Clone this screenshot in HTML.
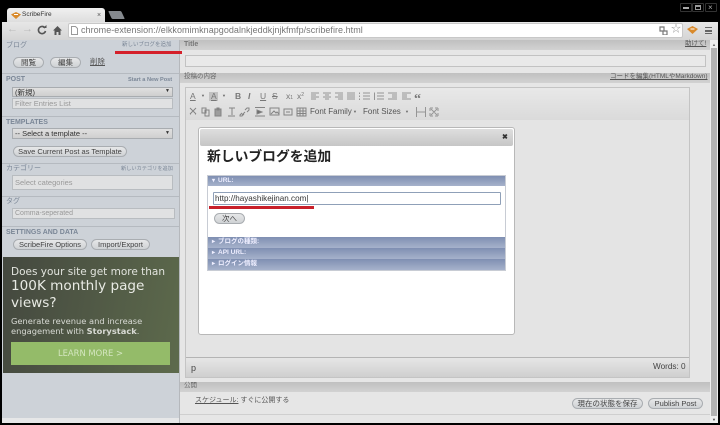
<!DOCTYPE html>
<html><head><meta charset="utf-8">
<style>
html,body{margin:0;padding:0;width:720px;height:425px;overflow:hidden;background:#000}
body{position:relative;font-family:"Liberation Sans","Noto Sans CJK JP",sans-serif;color:#555}
#w{position:absolute;left:0;top:0;width:720px;height:425px;filter:blur(.35px);overflow:hidden;background:#000}
div,span,svg{position:absolute;box-sizing:border-box}
.t{white-space:nowrap;line-height:1}
.lb{font-size:7px;color:#7b8797;font-weight:bold}
.lk{font-size:5.500px;color:#7b8797}
.btn{border:1px solid #a9adb1;border-radius:6px;background:linear-gradient(#e6e7e8,#cfd2d5);font-size:7.500px;color:#444;text-align:center;height:11px;line-height:9px;white-space:nowrap}
.inp{background:#e0e1e2;border:1px solid #b8bcc0;font-size:7.500px;color:#999;padding-left:2px;line-height:11px;white-space:nowrap}
.sel{background:linear-gradient(#e0e0e0,#cfcfcf);border:1px solid #a8acb0;font-size:7.500px;color:#333;padding-left:2px;line-height:9px;white-space:nowrap}
.hd{background:linear-gradient(#c0c0c0,#d2d2d2);left:180px;width:530px}
.ac{left:208px;width:297px;background:linear-gradient(#7f8fb2,#a6b2cb);color:#eef;font-size:6.500px;font-weight:bold;line-height:10px;padding-left:10px;white-space:nowrap}
.ar{left:4px;top:0;font-size:6px;line-height:10px}
.ic{font-size:8.500px;color:#777;line-height:1;white-space:nowrap}
</style></head><body><div id="w">

<!-- tab -->
<div style="left:7px;top:8px;width:98px;height:15px;background:linear-gradient(#f0f0f0,#dcdcdc);border-radius:3px 3px 0 0"></div>
<svg style="left:11px;top:12px" width="10" height="7" viewBox="0 0 10 7"><path d="M0 2.500L5 0L10 2.500L5 7Z" fill="#d98a2b"/><path d="M3 2.500H7" stroke="#fff" stroke-width="1"/></svg>
<div class="t" style="left:22px;top:12px;font-size:6.500px;color:#333;">ScribeFire</div>
<div class="t" style="left:97px;top:12px;font-size:7px;color:#555">×</div>
<div style="left:110px;top:11px;width:13px;height:8px;background:#85898e;transform:skewX(25deg);border-radius:1px"></div>

<!-- window controls -->
<div style="left:680px;top:3px;width:12px;height:9px;border:1px solid #333;border-radius:1px"></div><div style="left:683px;top:7px;width:6px;height:2px;background:#aaa"></div>
<div style="left:692px;top:3px;width:12px;height:9px;border:1px solid #333;border-radius:1px"></div><div style="left:695px;top:5px;width:6px;height:5px;border:1px solid #999;border-top-width:2px"></div>
<div style="left:705px;top:3px;width:12px;height:9px;border:1px solid #333;border-radius:1px"></div><div class="t" style="left:708px;top:4px;font-size:8px;color:#aaa">×</div>

<!-- toolbar -->
<div style="left:2px;top:22px;width:716px;height:18px;background:linear-gradient(#e6e6e6,#d4d4d4)"></div>
<div class="t" style="left:7px;top:24px;font-size:11px;color:#bbb">←</div>
<div class="t" style="left:22px;top:24px;font-size:11px;color:#bbb">→</div>
<svg style="left:37px;top:25px" width="10" height="10" viewBox="0 0 10 10"><path d="M8 3A3.600 3.600 0 1 0 8.500 6" fill="none" stroke="#555" stroke-width="1.600"/><path d="M6 3H9.500V0Z" fill="#555"/></svg>
<svg style="left:53px;top:26px" width="9" height="9" viewBox="0 0 9 9"><path d="M4.500 0L9 4.500H7.500V9H5.500V6H3.500V9H1.500V4.500H0Z" fill="#555"/></svg>
<div style="left:68px;top:23px;width:615px;height:15px;background:#fff;border:1px solid #c8c8c8;border-radius:2px"></div>
<svg style="left:71px;top:26px" width="7" height="9" viewBox="0 0 7 9"><path d="M.5.500H4.500L6.500 2.500V8.500H.5Z" fill="#fff" stroke="#999"/></svg>
<div class="t" style="left:81px;top:25.500px;font-size:9px;color:#777;letter-spacing:.04px">chrome-extension://elkkomimknapgodalnkjeddkjnjkfmfp/scribefire.html</div>
<svg style="left:659px;top:26px" width="9" height="9" viewBox="0 0 9 9"><path d="M1 1H5V5H1ZM4 5H8V9H4Z" fill="none" stroke="#777" stroke-width="1.200"/></svg>
<div class="t" style="left:671px;top:25px;font-size:10px;color:#999">☆</div>
<svg style="left:687px;top:26px" width="11" height="8" viewBox="0 0 11 8"><path d="M0 3L5.500 0L11 3L5.500 8Z" fill="#d98a2b"/><path d="M3.500 3H7.500" stroke="#fff"/></svg>
<div style="left:705px;top:27px;width:7px;height:7px;border-top:1.500px solid #666;border-bottom:1.500px solid #666"></div><div style="left:705px;top:30px;width:7px;height:1.500px;background:#666"></div>

<!-- sidebar -->
<div style="left:2px;top:40px;width:178px;height:383px;background:#cdd2d8"></div>
<div style="left:2px;top:418px;width:178px;height:5px;background:#e6e7e8"></div>
<div style="left:179px;top:40px;width:1px;height:383px;background:#b5b8bc"></div>
<div class="t lb" style="left:6px;top:42px;font-weight:normal">ブログ</div>
<div class="t lk" style="left:122px;top:43px;">新しいブログを追加</div>
<div class="btn" style="left:13px;top:57px;width:31px">閲覧</div>
<div class="btn" style="left:50px;top:57px;width:31px">編集</div>
<div class="t" style="left:90px;top:58px;font-size:7.500px;color:#555;text-decoration:underline">削除</div>
<div style="left:2px;top:73px;width:177px;height:1px;background:#b5bac0"></div>
<div class="t lb" style="left:6px;top:76px">POST</div>
<div class="t lb" style="left:128px;top:77.500px;font-size:5.600px">Start a New Post</div>
<div class="sel" style="left:12px;top:87px;width:161px;height:10px">(新規)</div>
<div class="t" style="left:165px;top:89px;font-size:5px;color:#333">▼</div>
<div class="inp" style="left:12px;top:98px;width:161px;height:11px;line-height:9px">Filter Entries List</div>
<div style="left:2px;top:116px;width:177px;height:1px;background:#b5bac0"></div>
<div class="t lb" style="left:6px;top:119px">TEMPLATES</div>
<div class="sel" style="left:12px;top:128px;width:161px;height:11px;line-height:10px">-- Select a template --</div>
<div class="t" style="left:165px;top:131px;font-size:5px;color:#333">▼</div>
<div class="btn" style="left:13px;top:146px;width:114px">Save Current Post as Template</div>
<div style="left:2px;top:163px;width:177px;height:1px;background:#b5bac0"></div>
<div class="t lb" style="left:6px;top:165px;font-weight:normal">カテゴリー</div>
<div class="t lk" style="left:121px;top:167px;font-size:5.200px">新しいカテゴリを追加</div>
<div class="inp" style="left:12px;top:175px;width:161px;height:15px;line-height:13px">Select categories</div>
<div style="left:2px;top:196px;width:177px;height:1px;background:#b5bac0"></div>
<div class="t lb" style="left:6px;top:198px;font-weight:normal">タグ</div>
<div class="inp" style="left:12px;top:208px;width:163px;height:11px;line-height:9px;font-size:7px">Comma-seperated</div>
<div style="left:2px;top:226px;width:177px;height:1px;background:#b5bac0"></div>
<div class="t lb" style="left:6px;top:229px">SETTINGS AND DATA</div>
<div class="btn" style="left:13px;top:239px;width:74px">ScribeFire Options</div>
<div class="btn" style="left:91px;top:239px;width:59px">Import/Export</div>

<!-- ad -->
<div style="left:3px;top:257px;width:176px;height:116px;background:linear-gradient(100deg,#44483f,#5d6a4c)"></div>
<div class="t" style="left:11px;top:267px;font-size:10.500px;color:#e2e4de;font-family:'DejaVu Sans',sans-serif;">Does your site get more than</div>
<div class="t" style="left:11px;top:280px;font-size:13.600px;color:#e8eae4;font-family:'DejaVu Sans',sans-serif;">100K monthly page</div>
<div class="t" style="left:11px;top:297px;font-size:13.600px;color:#e8eae4;font-family:'DejaVu Sans',sans-serif">views?</div>
<div class="t" style="left:11px;top:317px;font-size:8.300px;color:#d8dad4;font-family:'DejaVu Sans',sans-serif">Generate revenue and increase</div>
<div class="t" style="left:11px;top:327px;font-size:8.300px;color:#d8dad4;font-family:'DejaVu Sans',sans-serif">engagement with <b>Storystack</b>.</div>
<div style="left:11px;top:342px;width:159px;height:23px;background:#94bb69"></div>
<div class="t" style="left:11px;top:349px;width:159px;text-align:center;font-size:8.400px;color:#d4e6c0;font-family:'DejaVu Sans',sans-serif">LEARN MORE &gt;</div>

<!-- main -->
<div style="left:180px;top:40px;width:530px;height:383px;background:#e6e6e6"></div>
<div class="hd" style="top:40px;height:10px"></div>
<div class="t" style="left:184px;top:41px;font-size:7px;color:#777;font-weight:bold">Title</div>
<div class="t" style="left:685px;top:41px;font-size:6.500px;color:#555;text-decoration:underline">助けて!</div>
<div style="left:115px;top:51px;width:67px;height:2.500px;background:#d4202a"></div>
<div style="left:185px;top:55px;width:521px;height:12px;background:#e9e9e9;border:1px solid #c2c2c2"></div>
<div class="hd" style="top:73px;height:10px"></div>
<div class="t" style="left:184px;top:74px;font-size:6.500px;color:#666">投稿の内容</div>
<div class="t" style="left:610px;top:74px;font-size:6.500px;color:#555;text-decoration:underline">コードを編集(HTMLやMarkdown)</div>

<!-- editor -->
<div style="left:185px;top:87px;width:505px;height:291px;background:#e4e4e4;border:1px solid #c4c4c4"></div>
<div style="left:186px;top:88px;width:503px;height:32px;background:linear-gradient(#e8e8e8,#dadada)"></div>
<div class="ic" style="left:190px;top:92px;text-decoration:underline">A</div>
<div class="t" style="left:201px;top:94px;font-size:4px;color:#666">▼</div>
<div style="left:209px;top:92px;width:9px;height:9px;background:#c2c2c2"></div><div class="ic" style="left:211px;top:92px;text-decoration:underline">A</div>
<div class="t" style="left:222px;top:94px;font-size:4px;color:#666">▼</div>
<div class="ic" style="left:235px;top:92px;font-weight:bold">B</div>
<div class="ic" style="left:248px;top:92px;font-style:italic;font-weight:bold">I</div>
<div class="ic" style="left:260px;top:92px;text-decoration:underline">U</div>
<div class="ic" style="left:272px;top:92px;text-decoration:line-through">S</div>
<div class="ic" style="left:286px;top:92px">x<span style="position:static;font-size:5px">1</span></div>
<div class="ic" style="left:297px;top:92px">x<span style="position:static;font-size:5px;vertical-align:3px">2</span></div>
<svg style="left:310px;top:92px;opacity:.85" width="102" height="9" viewBox="0 0 102 9" fill="none" stroke="#888" stroke-width="1"><path d="M1 1H9M1 3H6M1 5H9M1 7H6M13 1H21M15 3H19M13 5H21M15 7H19M25 1H33M28 3H33M25 5H33M28 7H33M37 1H45M37 3H45M37 5H45M37 7H45M53 1H60M53 4H60M53 7H60M49.500 .5V2M49.500 3.500V5M49.500 6.500V8M67 1H74M67 4H74M67 7H74M64.500 .5V8M78 1H87M82 3H87M82 5H87M78 7H87M92 1H101M92 3H97M92 5H97M92 7H101"/></svg>
<div class="t" style="left:414px;top:93px;font-size:14px;font-weight:bold;color:#777;font-family:'Liberation Serif',serif">“</div>
<svg style="left:189px;top:107px;opacity:.75" width="130" height="10" viewBox="0 0 130 10" fill="none" stroke="#666" stroke-width="1"><path d="M1 1L7 7M7 1L1 7M1 7H2M6 7H7"/><path d="M13 1H17V6H13ZM16 3H20V9H16Z"/><path d="M26 2H32V9H26ZM28 1H30V3H28Z" fill="#888"/><path d="M40 1H46M43 1V8M39 9H46"/><path d="M53 8L56 5M56 3L58 1H60V3L58 5M53 6L51 8V9H53L55 7"/><path d="M66 .5H76M68 3V7L73 5Z M66 9H76" fill="#444"/><path d="M81 1H90V8H81ZM82 7L85 4L87 6L88 5L90 7"/><path d="M95 2H103V8H95ZM97 5H101"/><path d="M108 1H117V9H108ZM108 4H117M108 6.500H117M111 1V9M114 1V9"/></svg>
<div class="t" style="left:310px;top:108px;font-size:8px;color:#555">Font Family</div>
<div class="t" style="left:353px;top:110px;font-size:4px;color:#666">▼</div>
<div class="t" style="left:363px;top:108px;font-size:8px;color:#555">Font Sizes</div>
<div class="t" style="left:405px;top:110px;font-size:4px;color:#666">▼</div>
<svg style="left:416px;top:107px;opacity:.7" width="24" height="10" viewBox="0 0 24 10" fill="none" stroke="#777"><path d="M.5 0V10M9.500 0V10M1 5H9M14 1H17M14 1V4M22 1H19M22 1V4M14 9H17M14 9V6M22 9H19M22 9V6M15 2L21 8M21 2L15 8"/></svg>

<div style="left:186px;top:357px;width:503px;height:20px;background:linear-gradient(#e6e6e6,#cfcfcf);border-top:1px solid #b4b4b4"></div>
<div class="t" style="left:191px;top:364px;font-size:9px;color:#444">p</div>
<div class="t" style="left:653px;top:363px;font-size:8.200px;color:#444">Words: 0</div>

<!-- dialog -->
<div style="left:198px;top:127px;width:317px;height:208px;background:#fff;border:1px solid #b8b8b8;border-radius:3px"></div>
<div style="left:200px;top:129px;width:313px;height:17px;background:linear-gradient(#dedede,#c6c6c6);border-radius:2px"></div>
<div class="t" style="left:502px;top:134px;font-size:7px;font-weight:bold;color:#333">✖</div>
<div class="t" style="left:207px;top:150px;font-size:13.800px;font-weight:bold;color:#222">新しいブログを追加</div>
<div style="left:207px;top:175px;width:299px;height:96px;border:1px solid #c8ccd4"></div>
<div class="ac" style="top:176px;height:10px"><span class="ar">▾</span>URL:</div>
<div style="left:213px;top:192px;width:288px;height:13px;background:#fff;border:1px solid #8fa0b8;border-radius:1px;font-size:8.100px;color:#333;line-height:11px;padding-left:1px;white-space:nowrap">http://hayashikejinan.com|</div>
<div style="left:209px;top:206px;width:105px;height:2.500px;background:#c8202a"></div>
<div class="btn" style="left:214px;top:213px;width:31px;height:11px">次へ</div>
<div class="ac" style="top:237px;height:11px"><span class="ar">▸</span>ブログの種類:</div>
<div class="ac" style="top:248px;height:11px"><span class="ar">▸</span>API URL:</div>
<div class="ac" style="top:259px;height:11px"><span class="ar">▸</span>ログイン情報</div>

<!-- publish -->
<div class="hd" style="top:382px;height:10px"></div>
<div class="t" style="left:184px;top:383px;font-size:6.500px;color:#666">公開</div>
<div class="t" style="left:195px;top:397px;font-size:7px;color:#555"><span style="position:static;text-decoration:underline">スケジュール:</span> すぐに公開する</div>
<div class="btn" style="left:572px;top:398px;width:71px">現在の状態を保存</div>
<div class="btn" style="left:648px;top:398px;width:55px">Publish Post</div>
<div style="left:180px;top:414px;width:530px;height:1px;background:#cfcfcf"></div>

<!-- scrollbar -->
<div style="left:710px;top:40px;width:8px;height:383px;background:#f0f0f0"></div>
<div style="left:711px;top:48px;width:6px;height:368px;background:#b4b4b4"></div>
<div class="t" style="left:712px;top:43px;font-size:4px;color:#666">▲</div>
<div class="t" style="left:712px;top:418px;font-size:4px;color:#444">▼</div>
</div></body></html>
